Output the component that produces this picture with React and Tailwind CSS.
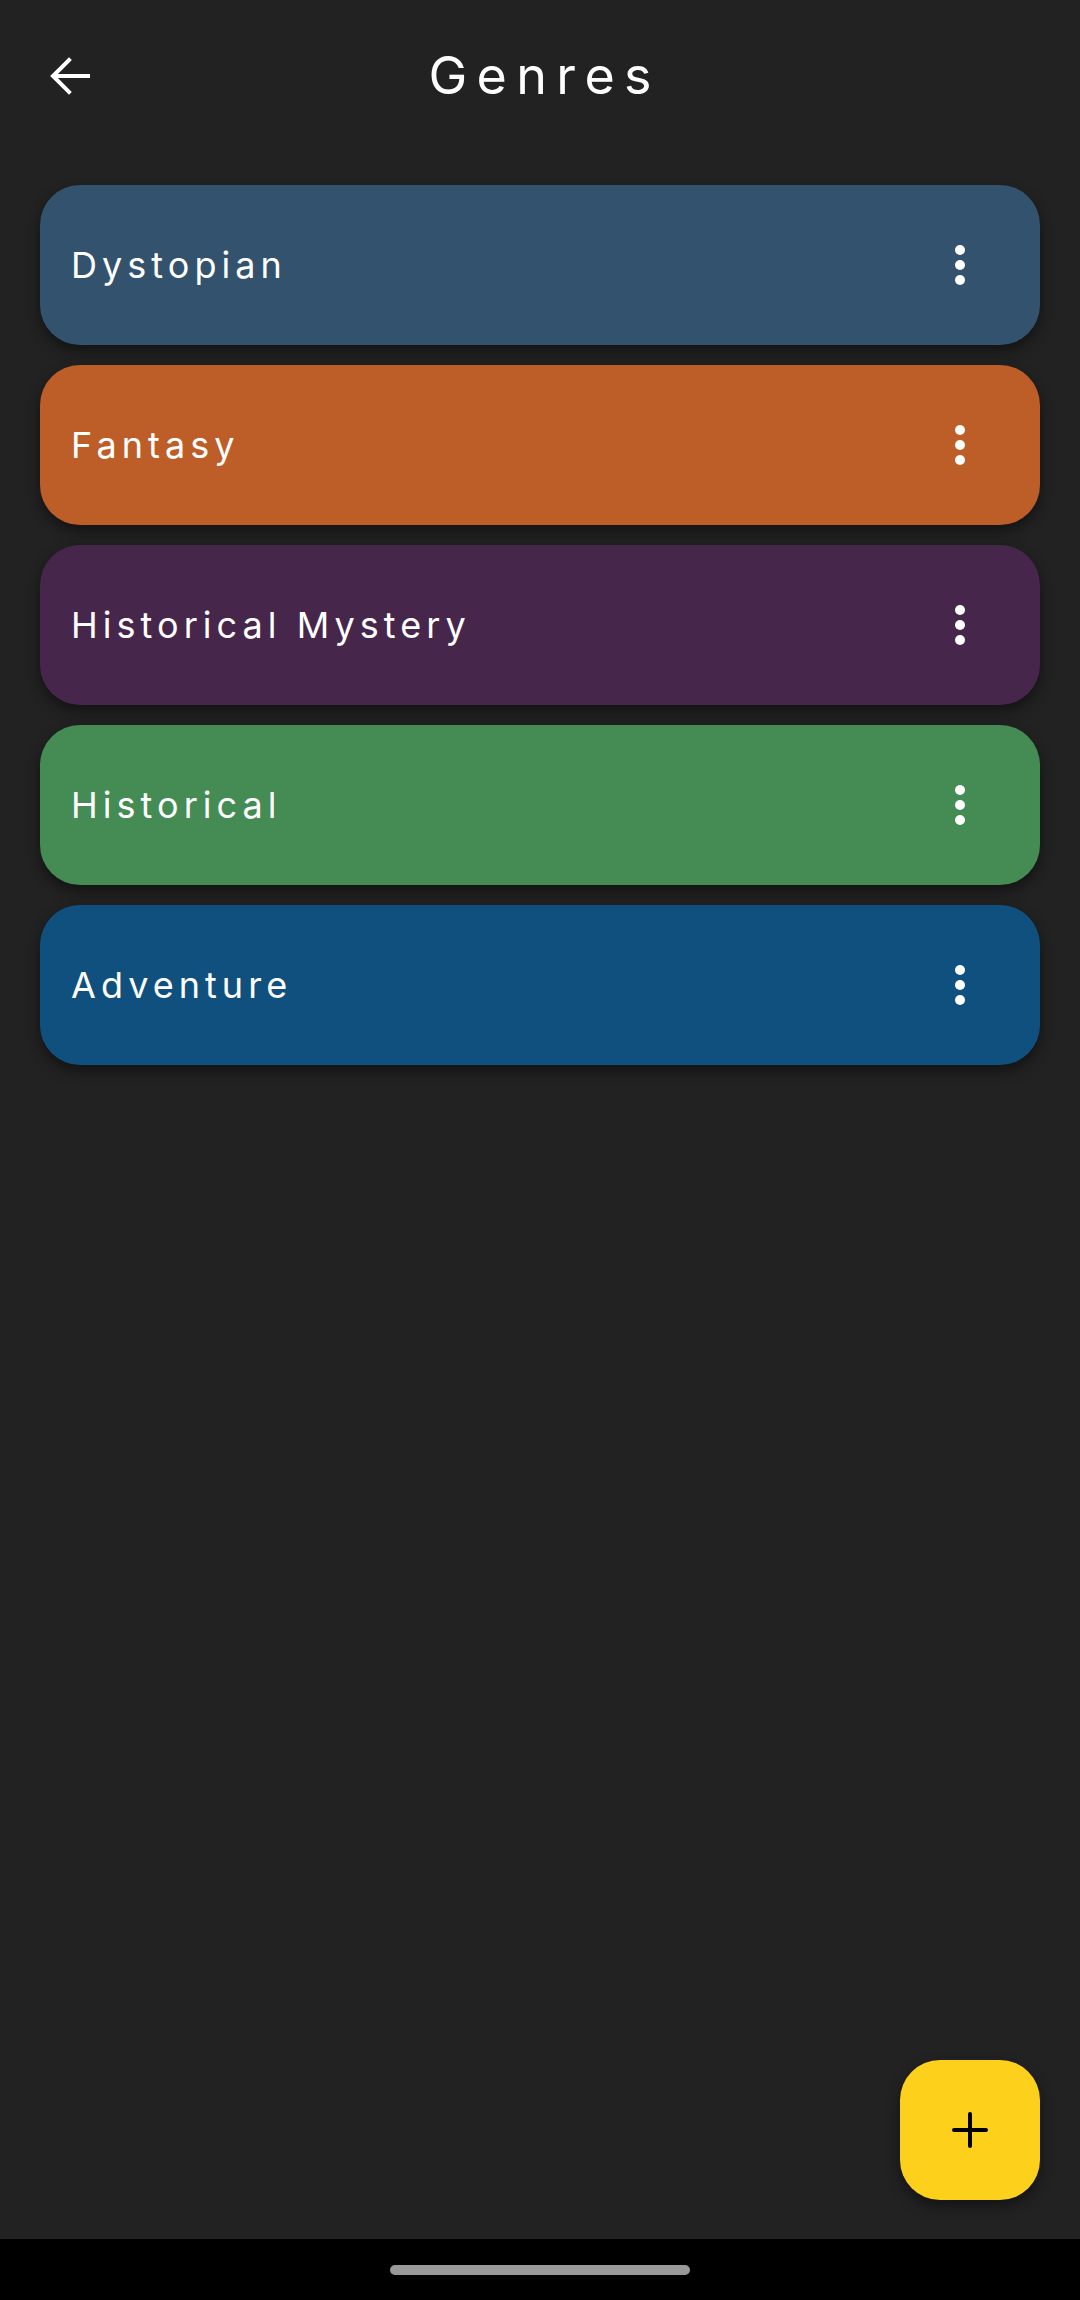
import React from "react";

const genres = [
  { name: "Dystopian", color: "bg-[#33526d]" },
  { name: "Fantasy", color: "bg-[#bd5e29]" },
  { name: "Historical Mystery", color: "bg-[#47264c]" },
  { name: "Historical", color: "bg-[#448b54]" },
  { name: "Adventure", color: "bg-[#10507f]" },
];

const GenreCard = ({ name, color }) => {
  return (
    <div
      className={`${color} h-[160px] rounded-[40px] flex items-center justify-between pl-[31px] pr-[75px] shadow-[0_6px_14px_rgba(0,0,0,0.45)]`}
    >
      <span className="text-white text-[36px] tracking-[0.14em] font-[Inter,sans-serif]">
        {name}
      </span>
      {/* menu dots */}
      <div className="flex flex-col items-center gap-[5px]">
        <span className="w-[10px] h-[10px] rounded-full bg-white" />
        <span className="w-[10px] h-[10px] rounded-full bg-white" />
        <span className="w-[10px] h-[10px] rounded-full bg-white" />
      </div>
    </div>
  );
};

const App = () => {
  return (
    <div className="relative flex flex-col h-screen bg-[#222222] font-[Inter,sans-serif]">
      <header className="relative h-[152px] flex items-center justify-center">
        <button className="absolute left-[50px] top-[57px] w-[40px] h-[38px] text-white">
          <svg viewBox="0 0 40 38" width="40" height="38" fill="none" stroke="white" strokeWidth="4" strokeLinecap="square">
            <path d="M38 19H5" />
            <path d="M19 3L3 19l16 16" />
          </svg>
        </button>
        <h1 className="text-white text-[52px] tracking-[0.18em] pl-[0.18em]">Genres</h1>
      </header>

      <main className="flex-1 px-[40px] pt-[33px] flex flex-col gap-[20px]">
        {genres.map((g) => (
          <GenreCard key={g.name} name={g.name} color={g.color} />
        ))}
      </main>

      {/* add button */}
      <button className="absolute right-[40px] bottom-[100px] w-[140px] h-[140px] rounded-[40px] bg-[#fdd01c] flex items-center justify-center shadow-[0_6px_14px_rgba(0,0,0,0.45)]">
        <svg viewBox="0 0 36 36" width="36" height="36" fill="none" stroke="black" strokeWidth="4" strokeLinecap="round">
          <path d="M18 2v32M2 18h32" />
        </svg>
      </button>

      <div className="h-[61px] bg-black flex items-center justify-center">
        <div className="w-[300px] h-[10px] rounded-full bg-[#999999]" />
      </div>
    </div>
  );
};

export default App;
